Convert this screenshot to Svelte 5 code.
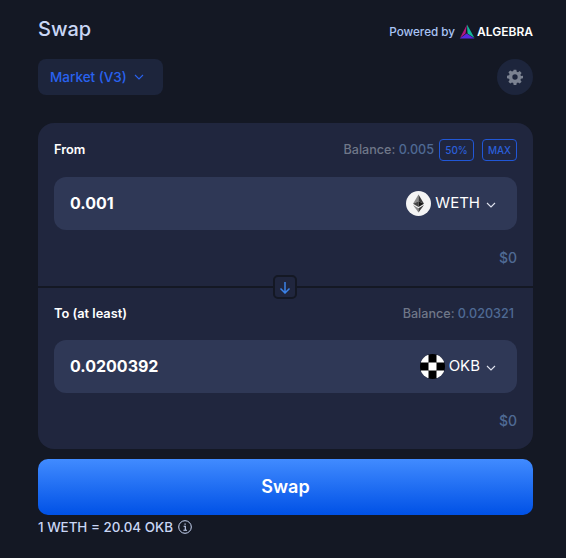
<script>
  const sides = [
    { label: "From", balance: "0.005", amount: "0.001", token: "WETH", actions: true },
    { label: "To (at least)", balance: "0.020321", amount: "0.0200392", token: "OKB", actions: false }
  ];
</script>

<div class="page">
  <header class="top">
    <h1>Swap</h1>
    <div class="powered">
      <span>Powered by</span>
      <svg class="algebra" width="16" height="15" viewBox="0 0 16 15">
        <path d="M8 0.5 L1 14 L6.5 9.5 Z" fill="#b5177f" />
        <path d="M8 0.5 L15.5 14 L8.5 9.5 Z" fill="#12b89c" />
        <path d="M7.6 9.5 L0.6 14.5 L15.6 14.5 Z" fill="#5a28e0" />
      </svg>
      <b>ALGEBRA</b>
    </div>
  </header>

  <div class="controls">
    <button class="market">
      Market (V3)
      <svg width="10" height="6" viewBox="0 0 10 6"><path d="M1 1 L5 5 L9 1" fill="none" stroke="currentColor" stroke-width="1.1" /></svg>
    </button>
    <button class="gear" aria-label="Settings">
      <svg width="16" height="16" viewBox="0 0 24 24" fill="#7b8291">
        <path fill-rule="evenodd" d="M10 1h4l.6 3.1 1.9.8L19.100 3.100l2.800 2.800-1.800 2.600.8 1.900L24 10v4l-3.100.6-.8 1.900 1.800 2.600-2.800 2.800-2.600-1.800-1.900.8L14 24h-4l-.6-3.100-1.900-.8-2.600 1.800-2.800-2.800 1.800-2.600-.8-1.900L0 14v-4l3.100-.6.8-1.900-1.800-2.600 2.800-2.800 2.600 1.800 1.900-.8zM12 8a4 4 0 1 0 0 8 4 4 0 0 0 0-8z" />
      </svg>
    </button>
  </div>

  <section class="card">
    {#each sides as side, i}
      <div class="side" class:first={i === 0}>
        <div class="meta">
          <span class="label">{side.label}</span>
          <div class="right">
            <span class="balance" class:solo={!side.actions}>Balance: <em>{side.balance}</em></span>
            {#if side.actions}
              <button class="pill">50%</button>
              <button class="pill">MAX</button>
            {/if}
          </div>
        </div>
        <div class="field">
          <span class="amount">{side.amount}</span>
          <div class="token">
            {#if side.token === "WETH"}
              <svg class="coin" width="25" height="25" viewBox="0 0 25 25">
                <circle cx="12.500" cy="12.500" r="12.500" fill="#f4f4f4" />
                <path d="M12.500 3.500 L7 12.800 L12.500 10.200 Z" fill="#8a8a8a" />
                <path d="M12.500 3.500 L18 12.800 L12.500 10.200 Z" fill="#3c3c3d" />
                <path d="M7 12.800 L12.500 16 L12.500 10.200 Z" fill="#454545" />
                <path d="M18 12.800 L12.500 16 L12.500 10.200 Z" fill="#161616" />
                <path d="M7 14 L12.500 21.500 L12.500 17.200 Z" fill="#8a8a8a" />
                <path d="M18 14 L12.500 21.500 L12.500 17.200 Z" fill="#3c3c3d" />
              </svg>
            {:else}
              <svg class="coin" width="25" height="25" viewBox="0 0 25 25">
                <defs><clipPath id="okb"><circle cx="12.500" cy="12.500" r="12.500" /></clipPath></defs>
                <g clip-path="url(#okb)">
                  <rect width="25" height="25" fill="#000" />
                  <rect x="1" y="1" width="7.500" height="7.500" fill="#fff" />
                  <rect x="16.500" y="1" width="7.500" height="7.500" fill="#fff" />
                  <rect x="8.500" y="8.500" width="8" height="8" fill="#fff" />
                  <rect x="1" y="16.500" width="7.500" height="7.500" fill="#fff" />
                  <rect x="16.500" y="16.500" width="7.500" height="7.500" fill="#fff" />
                </g>
              </svg>
            {/if}
            <span class="symbol">{side.token}</span>
            <svg class="chev" width="10" height="6" viewBox="0 0 10 6"><path d="M1 1 L5 5 L9 1" fill="none" stroke="currentColor" stroke-width="1.1" /></svg>
          </div>
        </div>
        <div class="usd">$0</div>
      </div>
    {/each}
    <button class="flip" aria-label="Switch tokens">
      <svg width="12" height="13" viewBox="0 0 12 13"><path d="M6 1 V12 M1.500 7.500 L6 12 L10.500 7.500" fill="none" stroke="#3b82e8" stroke-width="1.500" /></svg>
    </button>
  </section>

  <button class="swap">Swap</button>

  <div class="rate">
    1 WETH = 20.04 OKB
    <svg width="14" height="14" viewBox="0 0 14 14" fill="none" stroke="#c9d6f5">
      <circle cx="7" cy="7" r="6.300" stroke-width="1" />
      <path d="M5.600 6.200 H7.300 V10.300 M5.400 10.300 H9" stroke-width="1.100" />
      <path d="M6.500 3.500 H7.700 V4.700 H6.500 Z" fill="#c9d6f5" stroke="none" />
    </svg>
  </div>
</div>

<style>
  :global(body) {
    background: #141824;
    font-family: Inter, "Liberation Sans", sans-serif;
  }

  .page {
    width: 495px;
    height: 558px;
    box-sizing: border-box;
    margin-left: 38px;
    padding-top: 17px;
    color: #fff;
  }

  button {
    font-family: inherit;
    border: none;
    cursor: pointer;
    padding: 0;
  }

  .top {
    display: flex;
    justify-content: space-between;
    align-items: center;
    height: 24px;
  }

  h1 {
    margin: 0;
    font-size: 20px;
    font-weight: 500;
    line-height: 24px;
    color: #c9d6f5;
  }

  .powered {
    display: flex;
    align-items: center;
    font-size: 11.700px;
    font-weight: 500;
    color: #a9c4f5;
    margin-top: 5px;
  }

  .algebra {
    margin: 0 2px 0 4px;
  }

  .powered b {
    color: #fff;
    font-weight: 600;
    font-size: 12px;
  }

  .controls {
    display: flex;
    justify-content: space-between;
    margin-top: 18px;
  }

  .market {
    width: 125px;
    height: 36px;
    display: flex;
    align-items: center;
    gap: 7px;
    padding-left: 12px;
    box-sizing: border-box;
    background: #1d253c;
    border-radius: 8px;
    color: #2962ef;
    font-size: 13.500px;
    font-weight: 500;
  }

  .gear {
    width: 36px;
    height: 36px;
    border-radius: 50%;
    background: #1d253c;
    display: flex;
    align-items: center;
    justify-content: center;
  }

  .card {
    position: relative;
    margin-top: 28px;
    background: #20263e;
    border-radius: 16px;
    height: 326px;
  }

  .side {
    height: 161px;
    box-sizing: border-box;
    padding: 15px 16px 0;
  }

  .side.first {
    height: 165px;
    padding-top: 16px;
    border-bottom: 2px solid #141824;
  }

  .meta {
    display: flex;
    justify-content: space-between;
    align-items: flex-start;
    height: 21px;
  }

  .first .meta {
    height: 22px;
  }

  .label {
    font-size: 12.800px;
    font-weight: 600;
    line-height: 20px;
    color: #fff;
    margin-top: 1px;
  }

  .right {
    display: flex;
    align-items: flex-start;
    gap: 8px;
  }

  .balance {
    font-size: 12.600px;
    font-weight: 500;
    line-height: 20px;
    color: #6f7788;
    margin: 1px -3px 0 0;
  }

  .balance.solo {
    margin-right: 3px;
  }

  .balance em {
    font-style: normal;
    color: #4f6a94;
  }

  .pill {
    width: 35px;
    height: 22px;
    background: transparent;
    border: 1px solid #2157d6;
    border-radius: 4px;
    color: #2b5fd9;
    font-size: 10px;
    font-weight: 500;
  }

  .field {
    margin-top: 16px;
    height: 53px;
    background: #2f3856;
    border-radius: 12px;
    display: flex;
    align-items: center;
    justify-content: space-between;
    padding: 0 21px 0 16px;
  }

  .amount {
    font-size: 16px;
    font-weight: 700;
    color: #fff;
    margin-bottom: 2px;
  }

  .token {
    display: flex;
    align-items: center;
    font-size: 15px;
    color: #fff;
  }

  .symbol {
    margin-bottom: 2px;
  }

  .coin {
    margin-right: 4px;
  }

  .chev {
    margin-left: 6px;
    margin-top: 2px;
    color: #dfe3ee;
  }

  .usd {
    margin-top: 19px;
    text-align: right;
    font-size: 14px;
    font-weight: 500;
    color: #4f6a94;
  }

  .flip {
    position: absolute;
    left: 235px;
    top: 152px;
    width: 24px;
    height: 24px;
    box-sizing: border-box;
    background: #20263e;
    border: 2px solid #141824;
    border-radius: 5px;
    display: flex;
    align-items: center;
    justify-content: center;
  }

  .swap {
    display: block;
    width: 100%;
    height: 56px;
    margin-top: 10px;
    padding-bottom: 2px;
    border-radius: 10px;
    background: linear-gradient(#418bff, #0051e6);
    color: #fff;
    font-size: 18px;
    font-weight: 600;
  }

  .rate {
    margin-top: 4px;
    display: flex;
    align-items: center;
    gap: 5px;
    font-size: 13.400px;
    font-weight: 500;
    color: #c9d6f5;
    height: 16px;
  }
</style>
